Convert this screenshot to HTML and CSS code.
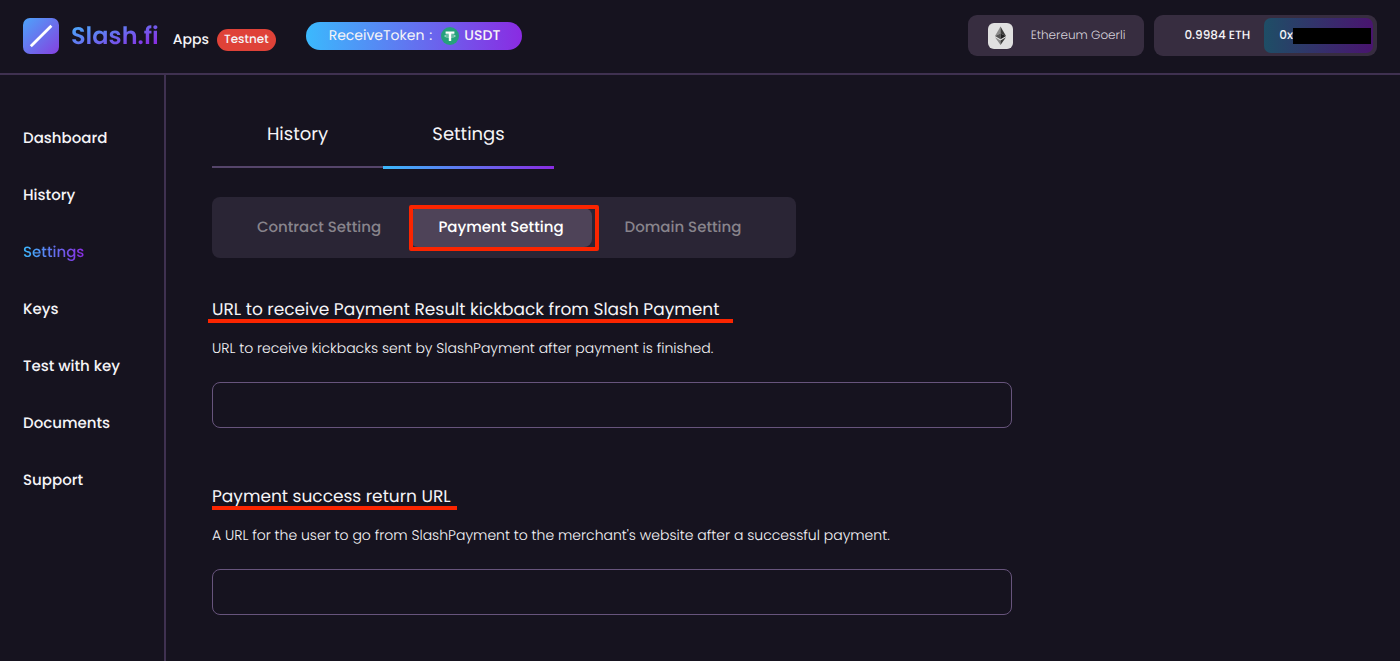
FILE: index.html
```html
<!DOCTYPE html>
<html lang="en">
<head>
<meta charset="utf-8">
<meta name="viewport" content="width=device-width, initial-scale=1">
<title>Slash.fi Apps</title>
<link rel="stylesheet" href="styles.css">
</head>
<body>
<header class="topbar">
  <a class="brand" href="#">
    <svg class="brand-mark" viewBox="0 0 36 36" aria-hidden="true">
      <defs>
        <linearGradient id="mark" x1="0" y1="0" x2="1" y2="1">
          <stop offset="0" stop-color="#4da4fa"/>
          <stop offset="1" stop-color="#8540e0"/>
        </linearGradient>
      </defs>
      <rect width="36" height="36" rx="7" fill="url(#mark)"/>
      <path d="M7.800 28.200L28.400 7.800" stroke="#fff" stroke-width="2.800"/>
    </svg>
    <span class="brand-name">Slash.fi</span>
  </a>
  <div class="env">
    <span class="env-name">Apps</span>
    <span class="env-badge">Testnet</span>
  </div>
  <button class="token" type="button">
    <span class="token-label">ReceiveToken</span>
    <span class="token-colon">:</span>
    <svg class="token-icon" viewBox="0 0 18 18" aria-hidden="true">
      <circle cx="9" cy="9" r="9" fill="#26a17b"/>
      <path d="M4.600 4.500H13.400V6.700H10.200V14H7.800V6.700H4.600Z" fill="#fff"/>
      <ellipse cx="9" cy="9" rx="5.400" ry="1.200" fill="none" stroke="#fff" stroke-width=".6"/>
    </svg>
    <span class="token-name">USDT</span>
  </button>
  <div class="account">
    <button class="network" type="button">
      <svg class="network-icon" viewBox="0 0 25 26" aria-hidden="true">
        <rect width="25" height="26" rx="6" fill="#e0e0e0"/>
        <path d="M12.500 3.500L7 13L12.500 10.500Z" fill="#8a8a8a"/>
        <path d="M12.500 3.500L18 13L12.500 10.500Z" fill="#3c3c3b"/>
        <path d="M7 13L12.500 10.500V16.200Z" fill="#555"/>
        <path d="M18 13L12.500 10.500V16.200Z" fill="#222"/>
        <path d="M7 14.200L12.500 17.500V22Z" fill="#8a8a8a"/>
        <path d="M18 14.200L12.500 17.500V22Z" fill="#3c3c3b"/>
      </svg>
      <span>Ethereum Goerli</span>
    </button>
    <div class="wallet">
      <span class="balance">0.9984 ETH</span>
      <button class="address" type="button">0x<span class="redacted"></span></button>
    </div>
  </div>
</header>
<div class="layout">
  <nav class="sidebar" aria-label="Main">
    <a href="#">Dashboard</a>
    <a href="#">History</a>
    <a href="#" aria-current="page"><span class="current">Settings</span></a>
    <a href="#">Keys</a>
    <a href="#">Test with key</a>
    <a href="#">Documents</a>
    <a href="#">Support</a>
  </nav>
  <main class="content">
    <nav class="tabs" aria-label="Section">
      <a class="tab" href="#">History</a>
      <a class="tab tab-active" href="#" aria-current="page">Settings</a>
    </nav>
    <div class="segments">
      <button class="segment" type="button">Contract Setting</button>
      <button class="segment segment-active" type="button">Payment Setting</button>
      <button class="segment" type="button">Domain Setting</button>
    </div>
    <form class="form">
      <div class="field">
        <label class="field-title marked-wide" for="kickback">URL to receive Payment Result kickback from Slash Payment</label>
        <p class="field-help" id="kickback-help">URL to receive kickbacks sent by SlashPayment after payment is finished.</p>
        <input class="field-input" id="kickback" type="url" aria-describedby="kickback-help">
      </div>
      <div class="field">
        <label class="field-title" for="success">Payment success return URL</label>
        <p class="field-help" id="success-help">A URL for the user to go from SlashPayment to the merchant's website after a successful payment.</p>
        <input class="field-input" id="success" type="url" aria-describedby="success-help">
      </div>
    </form>
  </main>
</div>
</body>
</html>
```
FILE: styles.css
```css
:root {
  --bg: #16131f;
  --line: #3f3150;
  --panel: #372d40;
  --mark: #fb2500;
  --accent: linear-gradient(90deg, #3bb9fd, #8a2be2);
}

* {
  box-sizing: border-box;
}

body {
  margin: 0;
  min-height: 100vh;
  display: flex;
  flex-direction: column;
  background: var(--bg);
  color: #f5f4f7;
  font-family: Poppins, Inter, "Liberation Sans", sans-serif;
  font-size: 15px;
  text-rendering: geometricPrecision;
}

a {
  color: inherit;
  text-decoration: none;
}

button {
  border: 0;
  color: inherit;
  font: inherit;
  text-rendering: inherit;
  cursor: pointer;
}

.topbar {
  display: flex;
  align-items: center;
  min-height: 75px;
  padding: 0 23px 2px;
  border-bottom: 2px solid var(--line);
}

.brand {
  display: flex;
  align-items: center;
  gap: 12px;
}

.brand-mark {
  width: 36px;
  height: 36px;
}

.brand-name {
  padding-top: 2px;
  font-size: 24px;
  line-height: 32px;
  font-weight: 600;
  background: linear-gradient(160deg, #4da4fa 15%, #8a2be2 85%);
  background-clip: text;
  color: transparent;
}

.env {
  display: flex;
  align-items: center;
  gap: 8px;
  margin: 8px 30px 0 14px;
  font-size: 14px;
  font-weight: 500;
}

.env-badge {
  padding: 0 7px;
  border-radius: 11px;
  background: #df4238;
  font-size: 12px;
  line-height: 22px;
  font-weight: 500;
}

.token {
  display: flex;
  align-items: center;
  height: 28px;
  padding: 0 22px 0 23px;
  border-radius: 14px;
  background: var(--accent);
  font-size: 14px;
}

.token-colon {
  margin: 0 9px 0 5px;
}

.token-icon {
  width: 18px;
  height: 18px;
  margin-right: 5px;
}

.token-name {
  font-weight: 500;
}

.account {
  display: flex;
  gap: 10px;
  margin-left: auto;
}

.network,
.wallet {
  display: flex;
  align-items: center;
  height: 41px;
  border-radius: 9px;
  background: var(--panel);
}

.network {
  gap: 18px;
  padding: 0 19px 0 20px;
  color: #d6d1db;
  font-size: 12px;
  font-weight: 300;
}

.network-icon {
  width: 25px;
  height: 26px;
}

.wallet {
  gap: 14px;
  padding: 0 4px 0 30px;
  font-size: 12px;
  font-weight: 500;
}

.address {
  display: flex;
  align-items: center;
  height: 35px;
  padding: 0 2px 0 15px;
  border-radius: 7px;
  background: linear-gradient(90deg, #1e4e66, #49146f);
}

.redacted {
  width: 78px;
  height: 16px;
  background: #000;
}

.layout {
  flex: 1;
  display: flex;
}

.sidebar {
  flex: none;
  width: 166px;
  display: flex;
  flex-direction: column;
  gap: 33px;
  padding: 52px 23px;
  border-right: 2px solid var(--line);
  line-height: 24px;
  font-weight: 500;
}

.current {
  background: var(--accent);
  background-clip: text;
  color: transparent;
}

.content {
  flex: 1;
  padding: 29px 46px;
}

.tabs {
  display: flex;
  align-items: flex-start;
}

.tab {
  width: 171px;
  padding: 18px 0;
  border-bottom: 2px solid #55456a;
  font-size: 18px;
  line-height: 26px;
  text-align: center;
}

.tab-active {
  border-image: var(--accent) 1;
  border-width: 0 0 3px;
  border-style: solid;
}

.segments {
  display: inline-flex;
  margin-top: 28px;
  padding: 11px 22px 11px 16px;
  border-radius: 8px;
  background: #2a2535;
}

.segment {
  min-width: 182px;
  height: 39px;
  padding: 0 24px;
  border-radius: 8px;
  background: none;
  color: #88848c;
  font-weight: 500;
}

.segment-active {
  position: relative;
  background: #4e4358;
  color: #fff;
}

.segment-active::after {
  content: "";
  position: absolute;
  inset: -3px -7px -4px -1px;
  border: 4px solid var(--mark);
  border-radius: 2px;
}

.form {
  display: grid;
  gap: 54px;
  margin-top: 37px;
}

.field-title {
  position: relative;
  display: inline-block;
  font-size: 17px;
  line-height: 28px;
}

.field-title::after {
  content: "";
  position: absolute;
  left: 0;
  right: -6px;
  bottom: 0;
  height: 4px;
  background: var(--mark);
}

.marked-wide::after {
  left: -4px;
  right: -14px;
}

.field-help {
  margin: 14px 0 23px;
  font-size: 14px;
  line-height: 22px;
  font-weight: 300;
}

.field-input {
  display: block;
  width: 100%;
  max-width: 800px;
  height: 46px;
  padding: 0 16px;
  border: 1px solid #67547c;
  border-radius: 8px;
  background: transparent;
  color: inherit;
  font: inherit;
}
```
